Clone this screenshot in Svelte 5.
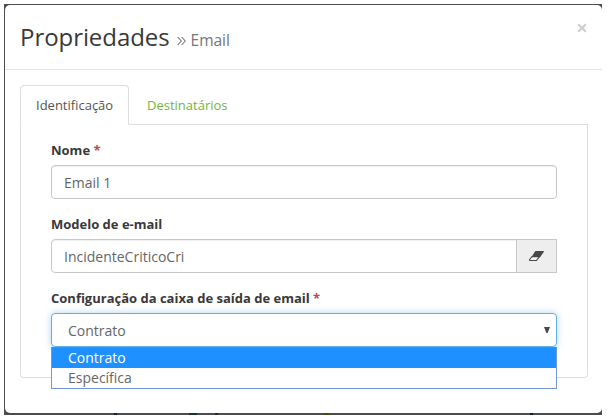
<script>
  let name = $state('Email 1');
  let model = $state('IncidenteCriticoCri');
  let selected = $state('Contrato');
  const options = ['Contrato', 'Específica'];
  // Parts of the dimmed page visible below the dialog
  const traces = [
    { x: 109, w: 3, c: '#10242d' },
    { x: 184, w: 8, c: '#1b3036' },
    { x: 210, w: 3, c: '#182b42' },
    { x: 319, w: 5, c: '#444a15' },
    { x: 525, w: 3, c: '#101f27' }
  ];
</script>

<div class="backdrop">
  <section class="modal">
    <header>
      <h1>Propriedades</h1>
      <svg class="chevrons" width="9" height="10" viewBox="0 0 9 10"><path d="M.7 1 4.3 5 .7 9M4.6 1 8.2 5 4.6 9" /></svg>
      <small>Email</small>
      <button class="close" aria-label="Fechar"><svg width="10" height="10" viewBox="0 0 10 10"><path d="M1.2 1.2 8.8 8.8M8.8 1.2 1.2 8.8" /></svg></button>
    </header>
    <div class="body">
      <nav>
        <button class="tab active">Identificação</button>
        <button class="tab">Destinatários</button>
      </nav>
      <div class="panel">
        <div class="group">
          <label for="name">Nome <b>*</b></label>
          <input id="name" bind:value={name} />
        </div>
        <div class="group">
          <label for="model">Modelo de e-mail</label>
          <div class="combo">
            <input id="model" bind:value={model} />
            <button class="erase" aria-label="Limpar">
              <svg width="15" height="10" viewBox="0 0 15 10">
                <path d="M6.3 0h8q1 0 .5 1L11 6.2H2.4z" fill="#484848" />
                <path d="M3 5.6.8 8.2q-.6 1.3.6 1.3h6L10.5 5.6z" fill="#f4f4f4" stroke="#484848" stroke-width="1.1" />
              </svg>
            </button>
          </div>
        </div>
        <div class="group">
          <span class="label">Configuração da caixa de saída de email <b>*</b></span>
          <div class="select">
            <button class="value"><span>{selected}</span><svg width="6" height="6" viewBox="0 0 6 6"><path d="M0 0h6L3.6 6H2.4z" fill="#484848" /></svg></button>
            <ul>
              {#each options as option}
                <li class:current={option === selected}>{option}</li>
              {/each}
            </ul>
          </div>
        </div>
      </div>
    </div>
  </section>
  <footer>
    {#each traces as t}
      <i style="left:{t.x}px;width:{t.w}px;background:{t.c}"></i>
    {/each}
  </footer>
</div>

<style>
  :global(body) { background: #fff; overflow: hidden; }
  * { box-sizing: border-box; }
  .backdrop {
    width: 598px; height: 411px; margin: 4px 0 0 4px; padding: 1px 0 0 1px;
    background: #4b4c4e; font: 14px/20px 'Open Sans', sans-serif; color: #666;
  }
  .modal { height: 408px; background: #fff; border-radius: 5px; }
  header {
    display: flex; align-items: baseline; height: 65px; padding: 15px 15px 0;
    border-bottom: 1px solid #e3e3e3;
  }
  h1 { margin: 0; font-size: 24px; line-height: 34px; font-weight: 400; color: #393939; letter-spacing: -.06px; }
  .chevrons { margin: 0 5px 0 7px; fill: none; stroke: #777; stroke-width: 1.1; }
  small { font-size: 15.6px; color: #777; letter-spacing: -.1px; }
  button { font: inherit; color: inherit; border: 0; background: none; padding: 0; margin: 0; text-align: left; }
  .close { display: flex; align-self: flex-start; margin: 3px 0 0 auto; }
  .close svg { fill: none; stroke: #ccc; stroke-width: 2; }
  .body { padding: 15px 14px 0 15px; }
  nav { display: flex; height: 40px; border-bottom: 1px solid #ddd; }
  .tab { height: 39px; padding: 0 15px; border: 1px solid transparent; font-size: 13px; color: #6fb53c; margin-left: 2px; }
  .tab.active { height: 40px; margin-left: 0; width: 109px; border-color: #ddd; border-bottom-color: #fff; border-radius: 4px 4px 0 0; color: #555; background: #fff; }
  .panel { height: 253px; padding: 16px 30px 0; border: 1px solid #ddd; border-top: 0; border-radius: 0 0 4px 4px; }
  .group { height: 74px; }
  label, .label { display: block; height: 24px; font-size: 13px; line-height: 19px; font-weight: 700; color: #393939; }
  b { color: #b94a48; font-weight: 700; }
  input {
    display: block; width: 100%; height: 34px; padding: 0 12px; border: 1px solid #c8c8c8;
    border-radius: 4px; background: #fff; color: #666; font: inherit; outline: 0;
    box-shadow: inset 0 1px 1px #0001;
  }
  .combo { display: flex; }
  .combo input { flex: 1; min-width: 0; border-radius: 4px 0 0 4px; }
  .erase { display: flex; align-items: center; justify-content: center; width: 41px; height: 34px; margin-left: -1px; border: 1px solid #c8c8c8; background: #eee; }
  .select { position: relative; }
  .value {
    display: flex; align-items: center; justify-content: space-between; width: 100%; height: 34px;
    padding: 2px 6px 0 16px; border: 1px solid #62aeea; border-radius: 4px; background: #fff;
    box-shadow: 0 0 7px #66afe980;
  }
  .value svg { margin-top: -3px; }
  ul {
    position: absolute; z-index: 1; top: 34px; left: 0; width: 100%; height: 42px; margin: 0; padding: 0;
    border: 1px solid #7495d8; border-top-color: #548bd0; background: #fff; list-style: none;
  }
  li { height: 20px; padding-left: 16px; line-height: 20px; }
  .current { background: #1e90ff; color: #fff; }
  footer { position: relative; height: 2px; overflow: hidden; }
  i { position: absolute; top: 0; height: 2px; }
</style>
